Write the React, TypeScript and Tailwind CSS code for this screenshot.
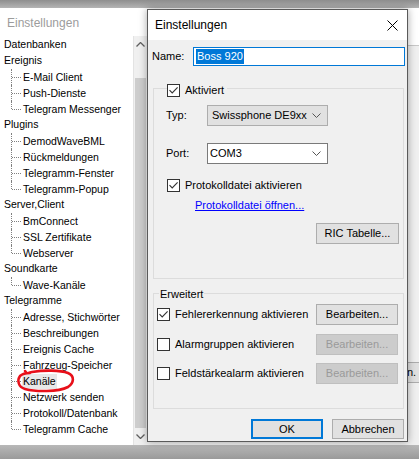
import React from "react";

const Check = ({ checked }: { checked?: boolean }) => (
  <span className="w-[13px] h-[13px] border border-[#333333] bg-white flex items-center justify-center shrink-0">
    {checked && (
      <svg width="11" height="11" viewBox="0 0 11 11">
        <path d="M1.5 5.2 L4.2 8 L9.6 2.4" fill="none" stroke="#333333" strokeWidth="1.1" />
      </svg>
    )}
  </span>
);

const Chevron = () => (
  <svg width="9" height="5" viewBox="0 0 9 5">
    <path d="M0.5 0.5 L4.5 4.5 L8.5 0.5" fill="none" stroke="#555555" strokeWidth="1" />
  </svg>
);

const tree: { label: string; children: string[] }[] = [
  { label: "Datenbanken", children: [] },
  { label: "Ereignis", children: ["E-Mail Client", "Push-Dienste", "Telegram Messenger"] },
  { label: "Plugins", children: ["DemodWaveBML", "Rückmeldungen", "Telegramm-Fenster", "Telegramm-Popup"] },
  { label: "Server,Client", children: ["BmConnect", "SSL Zertifikate", "Webserver"] },
  { label: "Soundkarte", children: ["Wave-Kanäle"] },
  {
    label: "Telegramme",
    children: [
      "Adresse, Stichwörter",
      "Beschreibungen",
      "Ereignis Cache",
      "Fahrzeug-Speicher",
      "Kanäle",
      "Netzwerk senden",
      "Protokoll/Datenbank",
      "Telegramm Cache",
    ],
  },
];

function Tree() {
  return (
    <div className="flex flex-col pt-[1px] text-[10.5px] text-black font-['Liberation_Sans',Arial,sans-serif]">
      {tree.map((g) => (
        <div key={g.label} className="flex flex-col">
          <div className="h-[16px] flex items-center pl-[4px] whitespace-nowrap">{g.label}</div>
          {g.children.map((c, i) => {
            const last = i === g.children.length - 1;
            const sel = c === "Kanäle";
            return (
              <div key={c} className="relative h-[16px] flex items-center pl-[22px] whitespace-nowrap">
                <span
                  className={
                    last
                      ? "absolute left-[11px] top-0 h-[8px] border-l border-dotted border-[#808080]"
                      : "absolute left-[11px] top-0 h-[16px] border-l border-dotted border-[#808080]"
                  }
                />
                <span className="absolute left-[12px] top-[8px] w-[9px] border-t border-dotted border-[#808080]" />
                <span className={sel ? "bg-[#e8e8e8] px-[1px] leading-[15px]" : "px-[1px] leading-[15px]"}>{c}</span>
              </div>
            );
          })}
        </div>
      ))}
    </div>
  );
}

function Btn({ label, w, disabled, def }: { label: string; w: string; disabled?: boolean; def?: boolean }) {
  const base = "h-full flex items-center justify-center shrink-0 ";
  const cls = disabled
    ? "border border-[#bfbfbf] bg-[#cccccc] text-[#9a9a9a]"
    : def
    ? "border-2 border-[#0078d7] bg-[#e1e1e1] text-black"
    : "border border-[#adadad] bg-[#e1e1e1] text-black";
  return <div className={base + cls + " " + w}>{label}</div>;
}

export default function App() {
  return (
    <div className="relative w-[419px] h-[459px] overflow-hidden bg-[#a3a3a3] font-['Liberation_Sans',Arial,sans-serif] text-[11px] text-black">
      {/* background window */}
      <div className="h-[8px] bg-gradient-to-b from-[#8e8e8e] to-[#b4b4b4]" />
      <div className="h-[437px] flex bg-white">
        <div className="w-[147px] flex flex-col shrink-0">
          <div className="h-[28px] flex items-center pl-[7px] pt-[1px] text-[12px] text-[#9c9c9c]">Einstellungen</div>
          <div className="flex-1 flex">
            <div className="relative flex-1 border-r border-[#e3e3e3]">
              <Tree />
              <svg className="absolute left-[16px] top-[333px]" width="60" height="26" viewBox="0 0 60 26">
                <path
                  d="M9 2 C 12 6, 10 4, 16 3 C 28 1, 44 1, 52 4 C 59 7, 58 14, 52 18 C 42 23, 20 23, 9 20 C 2 18, 1 11, 4 7 C 6 5, 9 4, 14 4"
                  fill="none"
                  stroke="#e8101a"
                  strokeWidth="2.6"
                  strokeLinecap="round"
                />
              </svg>
            </div>
            <div className="w-[13px] flex flex-col bg-[#f0f0f0]">
              <div className="h-[17px] flex items-center justify-center">
                <svg width="9" height="5" viewBox="0 0 9 5">
                  <path d="M0.5 4.5 L4.5 0.5 L8.5 4.5" fill="none" stroke="#606060" strokeWidth="1.3" />
                </svg>
              </div>
              <div className="h-[25px]" />
              <div className="flex-1 mx-[1px] bg-[#cdcdcd]" />
              <div className="h-[17px] flex items-center justify-center">
                <svg width="9" height="5" viewBox="0 0 9 5">
                  <path d="M0.5 0.5 L4.5 4.5 L8.5 0.5" fill="none" stroke="#606060" strokeWidth="1.3" />
                </svg>
              </div>
            </div>
          </div>
        </div>
        <div className="flex-1 flex flex-col">
          <div className="h-[38px] bg-white border-b border-[#c8c8c8]" />
          <div className="flex-1 bg-[#f0f0f0] flex flex-col">
            <div className="mt-[316px] ml-[256px] h-[21px] w-[40px] flex items-center pl-[3px] border border-[#adadad] bg-[#e1e1e1]">
              n.
            </div>
          </div>
        </div>
      </div>
      <div className="h-[14px] bg-gradient-to-b from-[#b8b8b8] to-[#9a9a9a]" />

      {/* dialog */}
      <div className="absolute left-[147px] top-[9px] w-[261px] h-[433px] border border-[#5a5a5a] bg-[#f0f0f0] flex flex-col shadow-[0_0_8px_rgba(0,0,0,0.35)]">
        <div className="h-[30px] bg-white flex items-center justify-between pl-[7px] pr-[9px] shrink-0">
          <span className="text-[12px]">Einstellungen</span>
          <svg width="11" height="11" viewBox="0 0 11 11">
            <path d="M0.5 0.5 L10.5 10.5 M10.5 0.5 L0.5 10.5" stroke="#000" strokeWidth="1" />
          </svg>
        </div>
        <div className="flex flex-col">
          {/* Name */}
          <div className="mt-[7px] h-[19px] flex items-center">
            <div className="w-[45px] pl-[4px]">Name:</div>
            <div className="w-[212px] h-[19px] border border-[#0078d7] bg-white flex items-center pl-[2px]">
              <span className="bg-[#0078d7] text-white leading-[15px] px-[1px]">Boss 920</span>
            </div>
          </div>

          {/* Group 1 */}
          <div className="relative mt-[22px] ml-[5px] w-[251px] h-[191px] border border-[#dcdcdc] flex flex-col">
            <div className="absolute top-[-7px] left-[13px] flex items-center gap-[5px] bg-[#f0f0f0] pr-[3px]">
              <Check checked />
              <span>Aktiviert</span>
            </div>
            <div className="mt-[16px] h-[21px] flex items-center">
              <div className="w-[53px] pl-[12px]">Typ:</div>
              <div className="w-[121px] h-[21px] border border-[#adadad] bg-[#e1e1e1] flex items-center justify-between pl-[4px] pr-[6px]">
                <span>Swissphone DE9xx</span>
                <Chevron />
              </div>
            </div>
            <div className="mt-[17px] h-[21px] flex items-center">
              <div className="w-[53px] pl-[12px]">Port:</div>
              <div className="w-[121px] h-[21px] border border-[#7a7a7a] bg-white flex items-center justify-between pl-[2px] pr-[6px]">
                <span>COM3</span>
                <Chevron />
              </div>
            </div>
            <div className="mt-[15px] h-[13px] flex items-center pl-[13px] gap-[5px]">
              <Check checked />
              <span>Protokolldatei aktivieren</span>
            </div>
            <div className="mt-[6px] h-[14px] flex items-center pl-[41px]">
              <span className="text-[#0000ff] underline">Protokolldatei öffnen...</span>
            </div>
            <div className="mt-[11px] h-[21px] flex pl-[162px]">
              <Btn label="RIC Tabelle..." w="w-[83px]" />
            </div>
          </div>

          {/* Group 2 */}
          <div className="relative mt-[14px] ml-[5px] w-[251px] h-[116px] border border-[#dcdcdc] flex flex-col">
            <div className="absolute top-[-8px] left-[5px] bg-[#f0f0f0] px-[1px]">Erweitert</div>
            <div className="mt-[10px] h-[21px] flex items-center pl-[3px]">
              <Check checked />
              <span className="flex-1 pl-[5px]">Fehlererkennung aktivieren</span>
              <div className="h-[21px] flex mr-[5px]">
                <Btn label="Bearbeiten..." w="w-[82px]" />
              </div>
            </div>
            <div className="mt-[9px] h-[21px] flex items-center pl-[3px]">
              <Check />
              <span className="flex-1 pl-[5px]">Alarmgruppen aktivieren</span>
              <div className="h-[21px] flex mr-[5px]">
                <Btn label="Bearbeiten..." w="w-[82px]" disabled />
              </div>
            </div>
            <div className="mt-[8px] h-[21px] flex items-center pl-[3px]">
              <Check />
              <span className="flex-1 pl-[5px]">Feldstärkealarm aktivieren</span>
              <div className="h-[21px] flex mr-[5px]">
                <Btn label="Bearbeiten..." w="w-[82px]" disabled />
              </div>
            </div>
          </div>

          {/* buttons */}
          <div className="mt-[10px] h-[20px] flex justify-end gap-[9px] pr-[3px]">
            <Btn label="OK" w="w-[72px]" def />
            <Btn label="Abbrechen" w="w-[72px]" />
          </div>
        </div>
      </div>
    </div>
  );
}
